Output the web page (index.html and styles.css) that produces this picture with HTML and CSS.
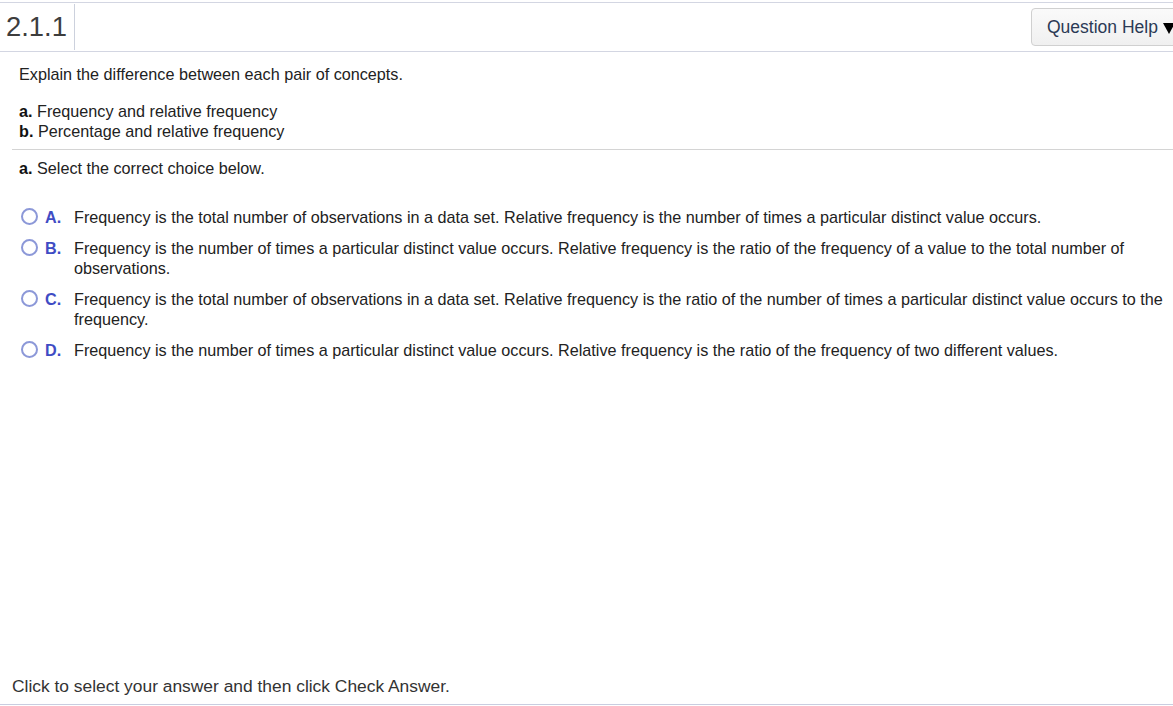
FILE: index.html
```html
<!DOCTYPE html>
<html>
<head>
<meta charset="utf-8">
<link rel="stylesheet" href="styles.css">
</head>
<body>
<div class="page">
  <header class="topbar">
    <div class="qnum">2.1.1</div>
    <div class="spacer"></div>
    <button class="help">Question Help<span class="tri"></span></button>
  </header>
  <main class="content">
    <p class="intro">Explain the difference between each pair of concepts.</p>
    <p class="pairs"><b>a.</b> Frequency and relative frequency<br><b>b.</b> Percentage and relative frequency</p>
    <div class="rule"></div>
    <p class="prompt"><b>a.</b> Select the correct choice below.</p>
    <ul class="choices">
      <li class="choice"><span class="radio"></span><span class="letter">A.</span><span class="text">Frequency is the total number of observations in a data set. Relative frequency is the number of times a particular distinct value occurs.</span></li>
      <li class="choice"><span class="radio"></span><span class="letter">B.</span><span class="text">Frequency is the number of times a particular distinct value occurs. Relative frequency is the ratio of the frequency of a value to the total number of observations.</span></li>
      <li class="choice"><span class="radio"></span><span class="letter">C.</span><span class="text">Frequency is the total number of observations in a data set. Relative frequency is the ratio of the number of times a particular distinct value occurs to the frequency.</span></li>
      <li class="choice"><span class="radio"></span><span class="letter">D.</span><span class="text">Frequency is the number of times a particular distinct value occurs. Relative frequency is the ratio of the frequency of two different values.</span></li>
    </ul>
  </main>
  <footer class="footer">Click to select your answer and then click Check Answer.</footer>
</div>
</body>
</html>
```
FILE: styles.css
```css
html, body {
  margin: 0;
  padding: 0;
  background: #fff;
}
body {
  font-family: "Liberation Sans", Arial, sans-serif;
  color: #222;
  overflow: hidden;
}
.page {
  width: 1173px;
  height: 706px;
  padding-top: 2px;
  box-sizing: border-box;
  display: flex;
  flex-direction: column;
}
.topbar {
  display: flex;
  align-items: stretch;
  height: 48px;
  border-top: 1px solid #d3d6e2;
  border-bottom: 1px solid #d3d6e2;
}
.qnum {
  font-size: 27.4px;
  color: #3d3d3d;
  padding: 0 7px 0 6px;
  margin: 1px 0;
  display: flex;
  align-items: center;
  border-right: 1px solid #ccd1dd;
  width: 61px;
}
.spacer { flex: 1; }
.help {
  align-self: center;
  margin-right: -14px;
  height: 38px;
  padding: 0 0 0 15px;
  width: 156px;
  display: flex;
  align-items: center;
  font-family: "Liberation Sans", Arial, sans-serif;
  font-size: 17.5px;
  color: #2b3a55;
  background: linear-gradient(#fafafa, #f0f0f0);
  border: 1px solid #d0d0d0;
  border-radius: 4px;
  white-space: nowrap;
}
.tri {
  width: 0;
  height: 0;
  margin-left: 5px;
  margin-top: 2px;
  border-left: 6px solid transparent;
  border-right: 6px solid transparent;
  border-top: 11px solid #000;
}
.content {
  flex: 1;
  padding: 0 0 0 12px;
  font-size: 16.2px;
  line-height: 20px;
}
.content p { margin: 0; }
.intro { padding: 12px 0 0 7px; }
.pairs { padding: 17px 0 0 7px; }
.pairs b, .prompt b { color: #111; }
.rule {
  margin-top: 8px;
  height: 1px;
  background: #d4d4d4;
}
.prompt { padding: 8px 0 0 7px; }
.choices {
  list-style: none;
  margin: 0;
  padding: 29px 0 0 9px;
}
.choice {
  display: flex;
  align-items: flex-start;
  margin-bottom: 11px;
}
.radio {
  flex: none;
  width: 13px;
  height: 13px;
  border: 2px solid #8c98d8;
  border-radius: 50%;
  margin-top: 1px;
  box-sizing: content-box;
}
.letter {
  flex: none;
  width: 29px;
  padding-left: 7px;
  font-weight: bold;
  color: #3f4cc4;
}
.text {
  flex: 1;
  padding-right: 2px;
}
.footer {
  height: 40px;
  box-sizing: border-box;
  padding: 11px 0 0 12px;
  font-size: 17.4px;
  color: #333;
  border-bottom: 1px solid #c9cde0;
  margin-bottom: 1px;
}
```
